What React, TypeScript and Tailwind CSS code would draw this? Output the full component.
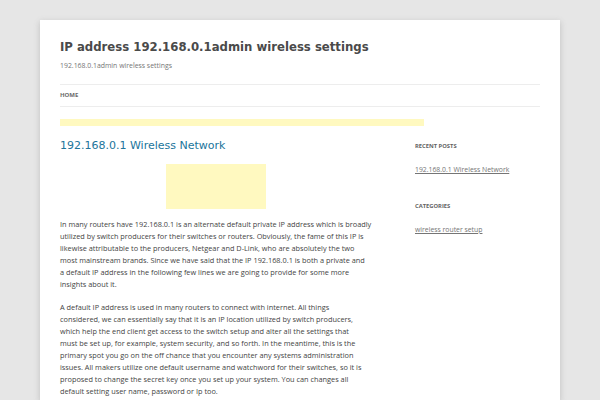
export default function App() {
  return (
    <div className="min-h-[400px] w-[600px] bg-[#e6e6e6] pt-5 px-10" style={{ fontFamily: '"Open Sans", sans-serif' }}>
      <div className="bg-white h-[380px] px-5 pt-[19px] shadow-[0_2px_6px_rgba(100,100,100,0.3)] overflow-hidden">
        <h1 className="text-[11.7px] leading-[16px] font-bold text-[#4a4a4a]" style={{ fontFamily: '"DejaVu Sans", sans-serif' }}>
          IP address 192.168.0.1admin wireless settings
        </h1>
        <p className="text-[6.9px] leading-[10px] text-[#757575] mt-[6px]">192.168.0.1admin wireless settings</p>
        <div className="mt-[13px] border-t border-[#ededed]" />
        <div className="h-[21px] flex items-center text-[6px] font-bold text-[#6a6a6a] uppercase">Home</div>
        <div className="border-t border-[#ededed]" />
        <div className="mt-[12px] h-[7px] w-[364px] bg-[#fff9c0]" />
        <div className="flex mt-[12px]">
          <div className="w-[320px] shrink-0">
            <h2 className="text-[11px] leading-[16px] text-[#21759b]" style={{ fontFamily: '"DejaVu Sans", sans-serif' }}>192.168.0.1 Wireless Network</h2>
            <div className="ml-[106px] mt-[10px] w-[100px] h-[45px] bg-[#fff9c0]" />
            <p className="mt-[9px] text-[7.35px] leading-[12px] text-[#444]">
              In many routers have 192.168.0.1 is an alternate default private IP address which is broadly<br />
              utilized by switch producers for their switches or routers. Obviously, the fame of this IP is<br />
              likewise attributable to the producers, Netgear and D-Link, who are absolutely the two<br />
              most mainstream brands. Since we have said that the IP 192.168.0.1 is both a private and<br />
              a default IP address in the following few lines we are going to provide for some more<br />
              insights about it.
            </p>
            <p className="mt-[11px] text-[7.35px] leading-[12px] text-[#444]">
              A default IP address is used in many routers to connect with internet. All things<br />
              considered, we can essentially say that it is an IP location utilized by switch producers,<br />
              which help the end client get access to the switch setup and alter all the settings that<br />
              must be set up, for example, system security, and so forth. In the meantime, this is the<br />
              primary spot you go on the off chance that you encounter any systems administration<br />
              issues. All makers utilize one default username and watchword for their switches, so it is<br />
              proposed to change the secret key once you set up your system. You can changes all<br />
              default setting user name, password or Ip too.
            </p>
          </div>
          <div className="ml-[35px] flex-1">
            <h3 className="text-[5.8px] leading-[10px] font-bold uppercase text-[#636363] mt-[3px]">Recent Posts</h3>
            <a className="block mt-[14px] text-[6.85px] leading-[10px] text-[#757575] underline">192.168.0.1 Wireless Network</a>
            <h3 className="text-[5.8px] leading-[10px] font-bold uppercase text-[#636363] mt-[26px]">Categories</h3>
            <a className="block mt-[14px] text-[6.85px] leading-[10px] text-[#757575] underline">wireless router setup</a>
          </div>
        </div>
      </div>
    </div>
  );
}
